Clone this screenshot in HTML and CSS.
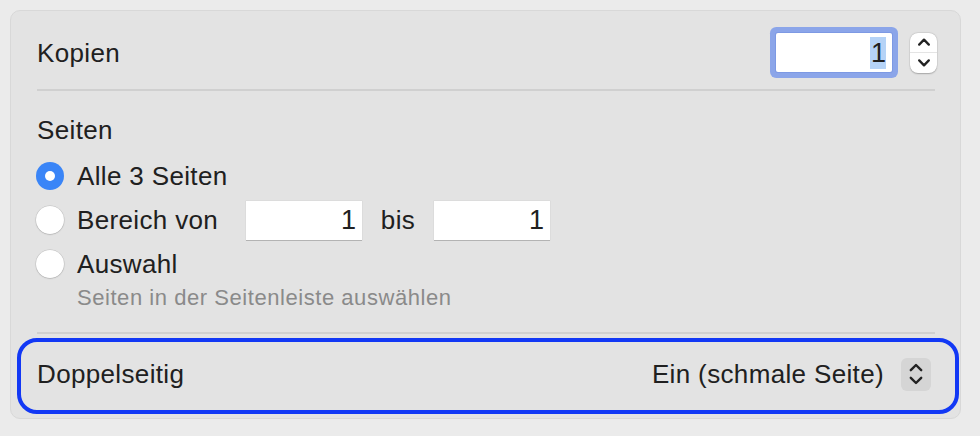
FILE: index.html
```html
<!DOCTYPE html>
<html lang="de">
<head>
<meta charset="utf-8">
<title>Drucken</title>
<link rel="stylesheet" href="styles.css">
</head>
<body>
<div class="panel">
  <div class="row copies">
    <span class="label">Kopien</span>
    <div class="copies-control">
      <div class="field focused"><span class="sel">1</span></div>
      <div class="stepper">
        <div class="step up"><svg width="12" height="8" viewBox="0 0 12 8"><polyline points="1.2,6.6 6,1.6 10.8,6.6" fill="none" stroke="#222222" stroke-width="2.3" stroke-linecap="round" stroke-linejoin="round"/></svg></div>
        <div class="step down"><svg width="12" height="8" viewBox="0 0 12 8"><polyline points="1.2,1.4 6,6.4 10.8,1.4" fill="none" stroke="#222222" stroke-width="2.3" stroke-linecap="round" stroke-linejoin="round"/></svg></div>
      </div>
    </div>
  </div>
  <div class="sep"></div>
  <div class="section-title">Seiten</div>
  <div class="radio-list">
    <div class="radio-row">
      <span class="radio checked"></span>
      <span class="label">Alle 3 Seiten</span>
    </div>
    <div class="radio-row">
      <span class="radio"></span>
      <span class="label range-label">Bereich von</span>
      <div class="field plain">1</div>
      <span class="label bis">bis</span>
      <div class="field plain">1</div>
    </div>
    <div class="radio-row">
      <span class="radio"></span>
      <span class="label">Auswahl</span>
    </div>
  </div>
  <div class="hint">Seiten in der Seitenleiste auswählen</div>
  <div class="sep sep-bottom"></div>
  <div class="duplex">
    <span class="label">Doppelseitig</span>
    <div class="popup-group">
      <span class="label">Ein (schmale Seite)</span>
      <div class="popup"><svg width="14" height="22" viewBox="0 0 14 22"><polyline points="1.8,7.2 7,2 12.2,7.2" fill="none" stroke="#222222" stroke-width="2.4" stroke-linecap="round" stroke-linejoin="round"/><polyline points="1.8,14.8 7,20 12.2,14.8" fill="none" stroke="#222222" stroke-width="2.4" stroke-linecap="round" stroke-linejoin="round"/></svg></div>
    </div>
  </div>
</div>
</body>
</html>
```

FILE: styles.css
```css
html, body {
  margin: 0;
  padding: 0;
}
body {
  width: 980px;
  height: 436px;
  overflow: hidden;
  background: #ebebeb;
  font-family: "Liberation Sans", Arial, sans-serif;
  color: #202020;
  font-size: 26px;
  letter-spacing: 0.35px;
}
.panel {
  margin: 10px 0 0 10px;
  width: 951px;
  height: 409px;
  box-sizing: border-box;
  border: 1px solid #d8d8d8;
  border-radius: 10px;
  background: #e3e3e3;
  padding: 0 25px 0 26px;
}
.label {
  line-height: 32px;
  white-space: nowrap;
}
.row.copies {
  height: 78px;
  padding-top: 5px;
  box-sizing: border-box;
  display: flex;
  align-items: center;
  justify-content: space-between;
}
.copies-control {
  display: flex;
  align-items: center;
  margin-right: -2px;
}
.field {
  width: 116px;
  height: 39px;
  box-sizing: border-box;
  background: #ffffff;
  display: flex;
  align-items: center;
  justify-content: flex-end;
  padding-right: 6px;
  line-height: 32px;
  font-size: 27px;
  letter-spacing: 0;
}
.field.focused {
  border-radius: 2px;
  box-shadow: 0 0 0 1px #7d99e3, 0 0 0 6px #8ba5e9;
  margin-right: 18px;
}
.sel {
  background: #b5d3f7;
  padding: 0 0 0 1px;
  height: 32px;
}
.stepper {
  width: 27px;
  height: 40px;
  border-radius: 8px;
  background: #ffffff;
  box-shadow: 0 0.5px 1.5px rgba(0,0,0,0.25), 0 0 0 0.5px rgba(0,0,0,0.06);
  display: flex;
  flex-direction: column;
}
.step {
  flex: 1;
  display: flex;
  align-items: center;
  justify-content: center;
}
.step.up {
  border-bottom: 1px solid #e4e4e4;
  padding-bottom: 1px;
}
.step.down {
  padding-top: 1px;
}
.sep {
  height: 2px;
  background: #d0d0d0;
}
.section-title {
  margin-top: 23px;
  line-height: 32px;
}
.radio-list {
  margin-top: 10px;
  display: flex;
  flex-direction: column;
  gap: 4px;
}
.radio-row {
  height: 40px;
  display: flex;
  align-items: center;
}
.radio {
  width: 28px;
  height: 28px;
  box-sizing: border-box;
  border-radius: 50%;
  background: #ffffff;
  box-shadow: 0 0 0 0.5px rgba(0,0,0,0.12), 0 0.5px 1.5px rgba(0,0,0,0.2);
  margin-left: -1px;
  margin-right: 13px;
  flex: none;
  display: flex;
  align-items: center;
  justify-content: center;
}
.radio.checked {
  background: #3a85f7;
  box-shadow: none;
}
.radio.checked::after {
  content: "";
  width: 10px;
  height: 10px;
  border-radius: 50%;
  background: #ffffff;
}
.range-label {
  width: 169px;
}
.field.plain {
  box-shadow: 0 1px 0 #b3b3b3, 0 0 0 0.5px #d6d6d6;
  padding-right: 6px;
}
.bis {
  width: 72px;
  text-align: center;
}
.hint {
  margin-top: 2px;
  padding-left: 40px;
  font-size: 22px;
  line-height: 24px;
  color: #8a8a8a;
  letter-spacing: 0.55px;
}
.sep-bottom {
  margin-top: 22px;
}
.duplex {
  margin: 4px -24px 0 -20px;
  height: 76px;
  box-sizing: border-box;
  border: 4px solid #1238f5;
  border-radius: 20px;
  padding: 0 24px 4px 16px;
  display: flex;
  align-items: center;
  justify-content: space-between;
}
.popup-group {
  display: flex;
  align-items: center;
}
.popup {
  width: 30px;
  height: 33px;
  margin-left: 17px;
  border-radius: 6px;
  background: #d5d5d5;
  display: flex;
  align-items: center;
  justify-content: center;
}
```
